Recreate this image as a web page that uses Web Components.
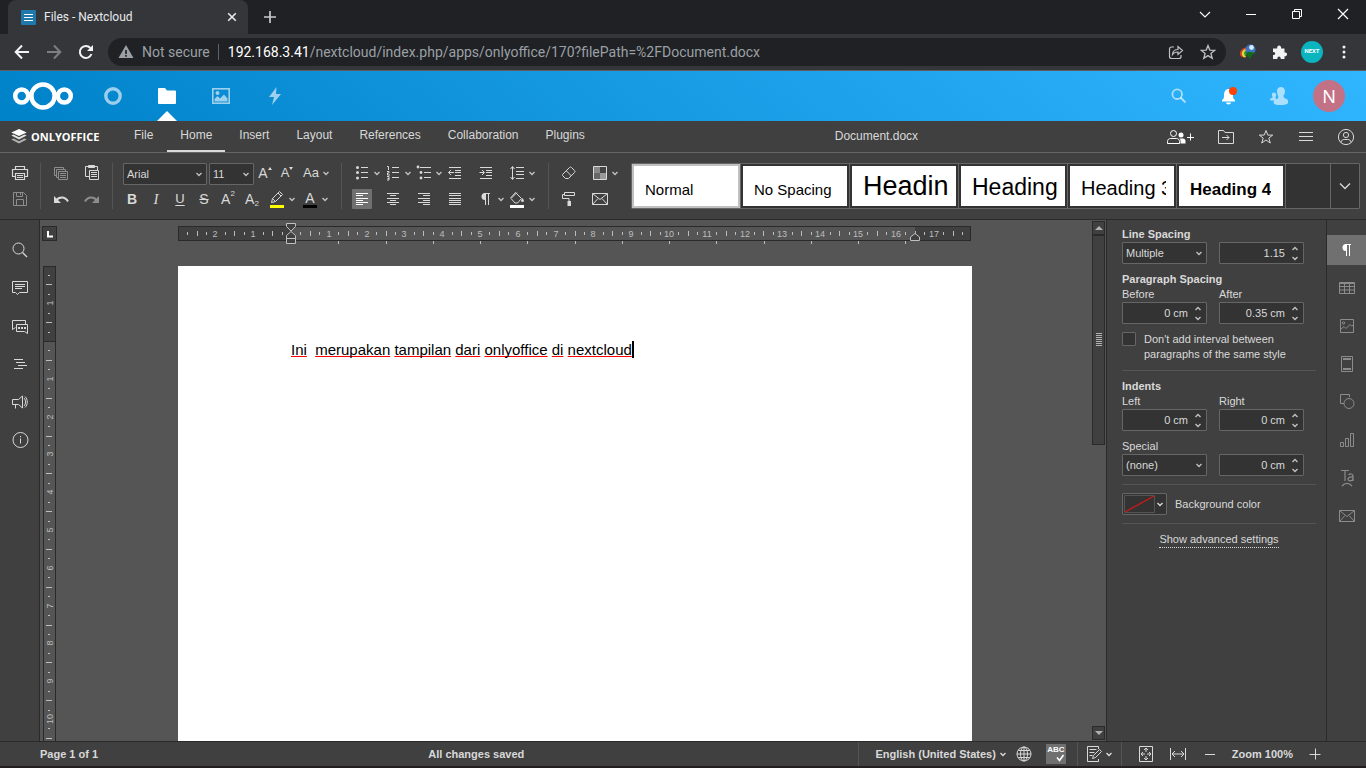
<!DOCTYPE html>
<html lang="en">
<head>
<meta charset="utf-8">
<title>Files - Nextcloud</title>
<style>
  html, body { margin: 0; height: 100%; }
  body { display: flex; flex-direction: column; overflow: hidden; background: #404040; font-family: "Liberation Sans", Arial, sans-serif; font-size: 11px; color: #d9d9d9; }
</style>
</head>
<body>
<browser-tabs></browser-tabs>
<browser-bar></browser-bar>
<cloud-header></cloud-header>
<office-header></office-header>
<office-toolbar></office-toolbar>
<office-main></office-main>
<status-bar></status-bar>
<script>
const BASE = `
  :host, *, *::before, *::after { box-sizing: border-box; }
  button { font: inherit; color: inherit; background: none; border: 0; margin: 0; padding: 0; display: flex; align-items: center; justify-content: center; }
  a { color: inherit; text-decoration: none; }
`;
function define(tag, css, html) {
  customElements.define(tag, class extends HTMLElement {
    connectedCallback() {
      if (this.shadowRoot) return;
      const root = this.attachShadow({ mode: 'open' });
      root.innerHTML = `<style>${BASE}${css}</style>` + (typeof html === 'function' ? html(this) : html);
    }
  });
}

/* Icons: [width, height, drawing]. Lines take the current text colour. */
const hl = (x, y, w) => `<path d="M${x} ${y + .5}h${w}"/>`;
const ICONS = {
  caret: [10, 10, '<path stroke-width="1.4" d="M2.500 4L5 6.500 7.500 4"/>'],
  /* browser */
  favicon: [15, 15, '<rect width="15" height="15" rx="1" fill="#1f79ad" stroke="none"/><path stroke="#fff" d="M3 4.500h9M3 7.500h9M3 10.500h9"/>'],
  close: [10, 10, '<path stroke-width="1.6" d="M1.2 1.2l7.6 7.6M8.8 1.2L1.2 8.8"/>'],
  plus: [12, 12, '<path stroke-width="1.7" d="M6 0v12M0 6h12"/>'],
  wdown: [12, 12, '<path stroke-width="1.1" d="M1 4l5 5 5-5"/>'],
  wmin: [12, 12, '<path d="M1 6.500h10"/>'],
  wmax: [12, 12, '<path d="M1.500 3.500h7v7h-7zM3.500 3.500v-2h7v7h-2"/>'],
  wclose: [12, 12, '<path stroke-width="1.2" d="M1 1l10 10M11 1L1 11"/>'],
  back: [16, 16, '<path stroke-width="2" d="M15 8H2M8 1.500L1.700 8 8 14.500"/>'],
  forward: [16, 16, '<path stroke-width="2" d="M1 8h13M8 1.500L14.300 8 8 14.500"/>'],
  reload: [16, 16, '<path stroke-width="2" d="M13.500 10A6 6 0 1 1 12.400 4"/><path fill="currentColor" stroke="none" d="M15 1v6H9z"/>'],
  warn: [16, 14, '<path fill="currentColor" stroke="none" d="M8 0l7.500 13H.5z"/><path stroke="#202124" stroke-width="1.700" d="M8 5v4M8 10v1.700"/>'],
  share: [16, 16, '<path stroke-width="1.200" d="M6 3H3.500a2 2 0 0 0-2 2v7.500a2 2 0 0 0 2 2h7.500a2 2 0 0 0 2-2V11M4.500 10.500c.3-3.500 2.200-5 5.500-5V2.500L14.500 6.500 10 10.500V8c-2.500 0-4.200.600-5.500 2.500z"/>'],
  bstar: [16, 16, '<path stroke-width="1.300" d="M8 1.500l1.800 4.600 4.900.3-3.800 3.100 1.300 4.800L8 11.600l-4.200 2.700 1.300-4.800L1.300 6.400l4.900-.3z"/>'],
  idm: [18, 16, '<g stroke="none"><path fill="#d94325" d="M1 10c0-4 3-6.500 7-6.500v2C5.500 6.500 5 9 6 11.500L7 13c-4 1-6-1-6-3z"/><path fill="#e6d43a" d="M2.800 9.500c0-2.500 2-4.500 5-4.500l-.5 2C5.500 8.500 5.500 11 7 12l-.5 1.500C4 13.500 2.800 11.500 2.800 9.500z"/><path fill="#1d9a34" d="M5 9.500C5 8 6 6.500 8 6.200L7.500 11H6z"/><circle cx="11.500" cy="5.500" r="5" fill="#3d74c4"/><circle cx="12.500" cy="3.500" r="2.400" fill="#d8ecff"/><path fill="#0f6d18" d="M8 7.500l9.500 1.500-4 1.500-3 5-1-3-4.500-.500 4-1.500z"/></g>'],
  puzzle: [16, 16, '<path fill="currentColor" stroke="none" d="M1 4.500h4.200c-.8-3.500 4.200-4.500 4-.2v.2h3.300v4c3.300-.8 3.500 3.700.3 3.700h-.3V15H8.700c.6-3.400-4-3.400-3.300 0H1v-4c3 .5 3-3.500 0-3z"/>'],
  dots: [4, 14, '<g fill="currentColor" stroke="none"><circle cx="2" cy="2" r="1.500"/><circle cx="2" cy="7" r="1.500"/><circle cx="2" cy="12" r="1.500"/></g>'],
  /* cloud header */
  cloud: [62, 30, '<g stroke="#fff"><circle cx="31" cy="15" r="11.600" stroke-width="4.500"/><circle cx="9.700" cy="15" r="6.500" stroke-width="4.500"/><circle cx="52.300" cy="15" r="6.500" stroke-width="4.500"/></g>'],
  ring: [18, 18, '<circle cx="9" cy="9" r="7.200" stroke-width="3.400"/>'],
  folder: [18, 16, '<path fill="currentColor" stroke="none" d="M1 0h6l2 2.500h8a1 1 0 0 1 1 1V15a1 1 0 0 1-1 1H1a1 1 0 0 1-1-1V1a1 1 0 0 1 1-1z"/>'],
  photo: [18, 16, '<rect x=".8" y=".8" width="16.400" height="14.400" stroke-width="1.600"/><g fill="currentColor" stroke="none"><circle cx="5.500" cy="5" r="2"/><path d="M2.500 13.500V11l3-3 2.500 2.500L12 6.500l3.500 4v3z"/></g>'],
  bolt: [14, 18, '<path fill="currentColor" stroke="none" d="M8.500 0L1 10h5l-2 8 9-11H8z"/>'],
  csearch: [16, 16, '<circle cx="6.200" cy="6.200" r="4.800" stroke-width="1.800"/><path stroke-width="2" d="M9.500 9.500l5 5"/>'],
  bell: [16, 18, '<g fill="#fff" stroke="none"><path d="M7 2C3.500 3 3 6 3 9c0 2-.5 3-2 4v1.500h13V13c-1.500-1-2-2-2-4 0-3-.5-6-4-7z"/><path d="M5 15.500h5a2.500 2 0 0 1-5 0z"/></g>'],
  people: [18, 18, '<g fill="currentColor" stroke="none"><path d="M11 0c2.500 0 4 1.800 4 4 0 2-.7 3.500-1.500 4.500 0 2 .5 2.500 4 4 .7.600.7 3 .3 4-3 2-12 2-14 0-.5-2 0-3 .5-3.500 3-1 4-1.500 4-3.500C7.500 8 7 6 7 4c0-2.200 1.500-4 4-4z"/><path d="M4 5.500c1 0 2.200.8 2.200 2.500 0 1.300-.8 2.200-.8 3.200l1.500.8-3.500 1.500H.5c-.5-.5-.5-1.500 0-2l2-1c.3-1-.6-1.700-.6-3 0-1.200.8-2 2.100-2z"/></g>'],
  notch: [20, 10, '<path fill="#fff" stroke="none" d="M10 0l10 10H0z"/>'],
  /* editor header */
  stack: [16, 15, '<g fill="currentColor" stroke="none"><path d="M8 0l7.700 3.500L8 7 .3 3.500z"/><path opacity=".85" d="M.3 6.500L2.500 5.600 8 8.200l5.500-2.600 2.200.9L8 10.500z"/><path opacity=".6" d="M.3 10.500l2.200-1L8 12.200l5.500-2.700 2.200 1L8 14.500z"/></g>'],
  users: [28, 14, '<circle cx="6.500" cy="3.500" r="3"/><path d="M.500 13.500v-2c0-2 1.500-3 3-3h6c1.500 0 3 1 3 3v2z"/><g fill="currentColor" stroke="none"><circle cx="14" cy="5" r="2.500"/><path d="M13.500 13.500V10l-1-1.500h3.500c1.500 0 2.500 1 2.500 2.500v2.500z"/></g><path d="M23.500 3.500v7M20 7.500h7"/>'],
  goto: [16, 14, '<path d="M.500 13.500V.500h5l1.500 2h8.500v11zM4 7.500h7M8.500 5L11 7.500 8.500 10"/>'],
  star: [16, 16, '<path d="M8 1.500l1.800 4.600h4.900l-3.900 3 1.500 4.900L8 11l-4.300 3 1.500-4.900-3.900-3h4.900z"/>'],
  menu: [14, 10, hl(0, 0, 14) + hl(0, 4, 14) + hl(0, 8, 14)],
  account: [18, 18, '<circle cx="9" cy="9" r="7.600"/><circle cx="9" cy="7" r="2.600"/><path d="M3.800 14.500c.5-2.500 2-3 3.500-3h3.400c1.500 0 3 .5 3.500 3"/>'],
  /* toolbar, 20px grid */
  print: [20, 20, '<path stroke-width="1.200" d="M5.500 6.500v-3h9v3M5.500 13.500h-3V6.500h15v7h-3M5.500 10.500h9v6h-9z"/><path d="M7 12.500h6M7 14.500h6"/>'],
  save: [20, 20, '<path d="M3.500 3.500h10l3 3v10h-13zM6.500 3.500v4h6v-4M6.500 16.500v-6h7v6M10.500 4v2"/>'],
  copy: [20, 20, '<path d="M5 12.500H3.500v-8h9V6M5.500 6.500h3M8 14.500H5.500V7"/><path d="M7.500 8.500h9v8h-9zM9 10.500h6M9 12.500h6M9 14.500h6M5.500 6.500h9V8"/>'],
  paste: [20, 20, '<path d="M7 13.500H3.500v-10h12V7"/><path fill="currentColor" d="M6.500 2.500h6v2h-6z"/><path d="M7.500 7.500h9v9h-9zM9 9.500h6M9 11.500h6M9 13.500h6"/>'],
  undo: [20, 20, '<path stroke-width="2" d="M5 11.500c3-4 9-4.500 12 1"/><path fill="currentColor" stroke="none" d="M3 7v7h7z"/>'],
  redo: [20, 20, '<path stroke-width="2" d="M15 11.500c-3-4-9-4.500-12 1"/><path fill="currentColor" stroke="none" d="M17 7v7h-7z"/>'],
  marker: [20, 20, '<path d="M4.500 13.500l1-4 7-7 3 3-7 7zM11 4l3 3M5.500 9.500l3 3"/><path stroke="#ff0" stroke-width="3" d="M3 17.500h14"/>'],
  bullets: [20, 20, '<g fill="currentColor" stroke="none"><circle cx="5.500" cy="4.500" r="1.500"/><circle cx="5.500" cy="9.500" r="1.500"/><circle cx="5.500" cy="15" r="1.500"/></g>' + hl(9, 4, 7) + hl(9, 9, 7) + hl(9, 14, 7)],
  numbers: [20, 20, '<path d="M4 3.500h1.500V7M4 8.500h2v1.500H4.500V12H7M4 13.500h2v3.500H4M4.500 15.500h1.500"/>' + hl(9, 4, 7) + hl(9, 9, 7) + hl(9, 14, 7)],
  levels: [20, 20, '<g fill="currentColor" stroke="none"><circle cx="4" cy="4" r="1.400"/><circle cx="7" cy="9.500" r="1.400"/><circle cx="7" cy="15" r="1.400"/></g>' + hl(6, 4, 11) + hl(10, 9, 7) + hl(10, 14, 7)],
  outdent: [20, 20, hl(4, 4, 12) + hl(10, 7, 6) + hl(10, 9, 6) + hl(10, 12, 6) + hl(4, 15, 12) + '<path d="M3.500 9.500H9M6 7L3.500 9.500 6 12"/>'],
  indent: [20, 20, hl(4, 4, 12) + hl(10, 7, 6) + hl(10, 9, 6) + hl(10, 12, 6) + hl(4, 15, 12) + '<path d="M3.500 9.500H8M6 7l2.500 2.500L6 12"/>'],
  spacing: [20, 20, hl(9, 4, 8) + hl(9, 8, 8) + hl(9, 11, 8) + hl(9, 15, 8) + '<path d="M5.500 4v12M3.500 6l2-2.500 2 2.500M3.500 14l2 2.500 2-2.500"/>'],
  left: [20, 20, hl(4, 4, 12) + hl(4, 6, 7) + hl(4, 9, 12) + hl(4, 11, 7) + hl(4, 13, 12) + hl(4, 15, 7)],
  center: [20, 20, hl(4, 4, 12) + hl(7, 6, 6) + hl(4, 9, 12) + hl(7, 11, 6) + hl(4, 13, 12) + hl(7, 15, 6)],
  right: [20, 20, hl(4, 4, 12) + hl(9, 6, 7) + hl(4, 9, 12) + hl(9, 11, 7) + hl(4, 13, 12) + hl(9, 15, 7)],
  justify: [20, 20, hl(4, 4, 12) + hl(4, 6, 12) + hl(4, 9, 12) + hl(4, 11, 12) + hl(4, 13, 12) + hl(4, 15, 12)],
  pilcrow: [20, 20, '<path fill="currentColor" stroke="none" d="M9 4a3.500 3.500 0 0 0 0 7z"/><path d="M8 4.500h6M9.500 4v12M12.500 4v12"/>'],
  fill: [20, 20, '<path d="M8.500 3.500l6 6-4 4.500H8L4 9.500l6-6M8.500 3.500l-5 5.500"/><path fill="currentColor" stroke="none" d="M15.500 9l1.500 2.500a1.500 1.500 0 1 1-3 0z"/><path stroke="#fff" stroke-width="3" d="M3 17.500h14"/>'],
  eraser: [20, 20, '<path d="M3.500 11.500l7-7c.7-.7 1.300-.7 2 0l3 3c.7.700.7 1.300 0 2l-6 6h-3l-3-3c-.4-.4-.4-.6 0-1zM7.500 8l5 5"/>'],
  palette: [20, 20, '<g stroke="none"><path fill="#888" d="M4 4h6v6H4z"/><path fill="#444" d="M10 4h6v6h-6z"/><path fill="#666" d="M4 10h6v6H4z"/><path fill="#999" d="M10 10h6v6h-6z"/></g><path d="M3.500 3.500h13v13h-13z"/>'],
  roller: [20, 20, '<path d="M5.500 3.500h10v3h-10zM5.500 5.500h-2v4h6.500v3"/><path fill="currentColor" stroke="none" d="M8.500 12H12v5H8.500z"/>'],
  mail: [20, 20, '<path d="M2.500 4.500h15v11h-15zM2.500 4.500l7.500 6 7.500-6M2.500 15.500l5.500-6M17.500 15.500l-5.500-6"/>'],
  chevron: [14, 10, '<path stroke-width="1.300" d="M2 2.500l5 5 5-5"/>'],
  /* rails */
  find: [20, 20, '<circle cx="8.500" cy="8.500" r="5.500"/><path stroke-width="1.300" d="M12.500 12.500l4.500 4.500"/>'],
  comment: [20, 20, '<path d="M2.500 3.500h15v11h-8l-2 2-2-2h-3zM5 6.500h10M5 8.500h10M5 10.500h7"/>'],
  chat: [20, 20, '<path d="M2.500 13.500v-9h13V8M2.500 13.500l3-2M6.500 8.500h11v9l-3-2h-8z"/><path stroke-width="2" stroke-dasharray="2 1" d="M8 12h8"/>'],
  outline: [20, 20, hl(4, 5, 9) + hl(6, 8, 9) + hl(8, 11, 9) + hl(4, 14, 9)],
  speaker: [20, 20, '<path d="M2.500 7.500h6l4-3.500v12l-4-3.500h-6zM5.500 12.500v4M14 6c2 2 2 6 0 8M15 4.500c3 3 3 8 0 11"/>'],
  info: [20, 20, '<circle cx="10.500" cy="10" r="7.500"/><path d="M10.500 8.500v5M10.500 6v1.300"/>'],
  table: [20, 20, '<path d="M2.500 4.500h15v11h-15zM2.500 5.500h15M2.500 8.500h15M2.500 12h15M7.500 6v10M12.500 6v10"/>'],
  image: [20, 20, '<path d="M3.500 3.500h13v13h-13zM4 13l3-2.500 2 2 4-4 1.500 1.500 2-1"/><circle cx="6.500" cy="7" r="1.200"/>'],
  headfoot: [20, 20, '<path d="M4.500 2.500h11v15h-11z"/><path stroke-width="2" d="M6 5h8M6 15h8"/>'],
  shapes: [20, 20, '<path d="M7 11.500H3.500v-9h9V5"/><circle cx="12" cy="11.500" r="5"/>'],
  chart: [20, 20, '<path d="M3.500 12.500h3v4h-3zM8.500 8.500h3v8h-3zM13.500 3.500h3v13h-3z"/>'],
  textart: [20, 20, '<path stroke-width="1.200" d="M4 2.500h8M8 2.500V13M11.500 7c1-1.500 4.500-1.500 4.500 1v5M16 9c-6-.5-6 4-3 3.800 2 0 3-1.300 3-2.500M5 18c3-3.500 7-3.500 10 0"/>'],
  /* rulers and status */
  tabstop: [15, 15, '<path stroke="#fff" stroke-width="2" d="M6 5V10.500h5"/>'],
  arrowup: [8, 4, '<path fill="currentColor" stroke="none" d="M4 0l4 4H0z"/>'],
  arrowdown: [8, 4, '<path fill="currentColor" stroke="none" d="M4 4l4-4H0z"/>'],
  grip: [6, 14, [0, 2, 4, 6, 8, 10, 12].map(y => hl(0, y, 6)).join('')],
  spin: [8, 14, '<path stroke-width="1.400" d="M1.500 4L4 1.500 6.500 4M1.500 11L4 13.500 6.500 11"/>'],
  globe: [20, 20, '<circle cx="10" cy="10" r="7"/><ellipse cx="10" cy="10" rx="3.500" ry="7"/><path d="M10 3v14M3 10h14M4.500 6.500h11M4.500 13.500h11"/>'],
  check: [8, 8, '<path stroke-width="1.600" d="M1 3.500l2.500 3L7.500 1"/>'],
  review: [20, 20, '<path d="M14.500 5V2.500h-11v15h11V15M5.500 5.500h7M5.500 8.500h5M5.500 11.500h3M8.500 14.500l1-3 6-6 2 2-6 6z"/>'],
  fitpage: [20, 20, '<path d="M3.500 2.500h13v15h-13zM10 4v4M10 12v4M5 10h4M11 10h4M8 6l2-2 2 2M8 14l2 2 2-2M7 8l-2 2 2 2M13 8l2 2-2 2"/>'],
  fitwidth: [20, 20, '<path d="M2.500 4v12M17.500 4v12M4.500 10h11M7 7l-3 3 3 3M13 7l3 3-3 3"/>'],
  minus: [12, 12, hl(1, 6, 10)],
  add: [12, 12, '<path d="M.500 6.500h11M6.500 .500v11"/>'],
  nofill: [31, 18, '<path fill="#333" stroke="#555" d="M.500 .500h30v17H.500z"/><path stroke="#d01818" stroke-width="1.300" d="M1 17L30 1"/>'],
  up: [4, 3, '<path fill="currentColor" stroke="none" d="M2 0l2 3H0z"/>'],
  down: [4, 3, '<path fill="currentColor" stroke="none" d="M2 3l2-3H0z"/>']
};
define('ui-icon', ':host { display: block; flex: none; line-height: 0; } svg { display: block; overflow: visible; }', el => {
  const [w, h, d] = ICONS[el.getAttribute('name')];
  return `<svg width="${w}" height="${h}" viewBox="0 0 ${w} ${h}" fill="none" stroke="currentColor" aria-hidden="true">${d}</svg>`;
});
const icon = n => `<ui-icon name="${n}"></ui-icon>`;

/* Browser chrome */
define('browser-tabs', `
  :host { display: flex; height: 34px; background: #202124; padding-left: 8px; color: #e8eaed; flex: none; font-family: Roboto, "Open Sans", sans-serif; font-size: 12px; }
  .tab { display: flex; align-items: center; width: 240px; background: #35363a; border-radius: 8px 8px 0 0; padding: 0 11px 0 13px; gap: 8px; }
  .tab span { flex: 1; white-space: nowrap; }
  .new { width: 44px; color: #c8cacd; }
  .win { display: flex; margin-left: auto; height: 28px; color: #fff; }
  .win button { width: 46px; }
`, `<div class="tab">${icon('favicon')}<span>Files - Nextcloud</span><button aria-label="Close tab">${icon('close')}</button></div>
  <button class="new" aria-label="New tab">${icon('plus')}</button>
  <div class="win"><button aria-label="Search tabs">${icon('wdown')}</button><button aria-label="Minimize">${icon('wmin')}</button><button aria-label="Restore">${icon('wmax')}</button><button aria-label="Close">${icon('wclose')}</button></div>`);

define('browser-bar', `
  :host { display: flex; align-items: center; height: 37px; background: #35363a; border-bottom: 1px solid #5c5d60; flex: none; padding: 0 6px; color: #f1f3f4; font-family: Roboto, "Open Sans", sans-serif; font-size: 14px; }
  .nav { width: 32px; height: 28px; }
  .dim { color: #7d7e81; }
  .box { flex: 1; min-width: 0; display: flex; align-items: center; height: 28px; background: #202124; border-radius: 14px; margin: 0 6px; padding: 0 2px 0 10px; color: #9aa0a6; }
  .secure { display: flex; align-items: center; gap: 8px; }
  .url { flex: 1; min-width: 0; overflow: hidden; white-space: nowrap; border-left: 1px solid #5f6368; margin-left: 8px; padding-left: 9px; line-height: 16px; }
  .url b { font-weight: 400; color: #fff; }
  .box .nav { color: #bdc1c6; }
  .me { width: 22px; height: 22px; border-radius: 50%; background: #0ab5c0; color: #fff; font-size: 6px; font-weight: 700; margin: 0 5px; padding-bottom: 4px; }
  .more { width: 32px; height: 28px; }
`, `<button class="nav" aria-label="Back">${icon('back')}</button><button class="nav dim" aria-label="Forward">${icon('forward')}</button><button class="nav" aria-label="Reload">${icon('reload')}</button>
  <div class="box"><span class="secure">${icon('warn')}Not secure</span><div class="url" role="textbox" aria-label="Address"><b>192.168.3.41</b>/nextcloud/index.php/apps/onlyoffice/170?filePath=%2FDocument.docx</div>
  <button class="nav" aria-label="Share">${icon('share')}</button><button class="nav" aria-label="Bookmark">${icon('bstar')}</button></div>
  <button class="nav" aria-label="Download manager">${icon('idm')}</button><button class="nav" aria-label="Extensions">${icon('puzzle')}</button><button class="me" aria-label="Profile">NEXT</button><button class="more" aria-label="Menu">${icon('dots')}</button>`);

/* Cloud header */
define('cloud-header', `
  :host { display: flex; height: 50px; flex: none; padding: 0 12px; background: linear-gradient(40deg, #0082c9 0%, #30b6ff 100%); color: #fff; }
  .logo { display: flex; align-items: center; width: 74px; }
  nav { display: flex; }
  nav a { display: grid; place-items: center; grid-template-columns: 54px; grid-template-rows: 50px; }
  nav a > * { grid-area: 1 / 1; }
  .soft { color: rgba(255,255,255,.6); }
  .notch { align-self: end; }
  .side { display: flex; margin-left: auto; align-items: center; }
  .side button { width: 50px; height: 50px; position: relative; }
  .dot { position: absolute; left: 25px; top: 16px; width: 8px; height: 8px; border-radius: 50%; background: #ff4402; }
  .face { width: 32px; height: 32px; border-radius: 50%; background: #c37285; font-size: 18px; line-height: 32px; font-family: "Noto Sans", sans-serif; }
`, `<a class="logo" href="#" aria-label="Nextcloud">${icon('cloud')}</a>
  <nav><a class="soft" href="#" aria-label="Dashboard">${icon('ring')}</a><a href="#" aria-label="Files">${icon('folder')}<span class="notch">${icon('notch')}</span></a><a class="soft" href="#" aria-label="Photos">${icon('photo')}</a><a class="soft" href="#" aria-label="Activity">${icon('bolt')}</a></nav>
  <div class="side"><button class="soft" aria-label="Search">${icon('csearch')}</button><button aria-label="Notifications">${icon('bell')}<span class="dot"></span></button><button class="soft" aria-label="Contacts">${icon('people')}</button><button aria-label="Account"><span class="face">N</span></button></div>`);

/* Editor header */
define('office-header', `
  :host { display: flex; height: 32px; flex: none; background: #404040; border-bottom: 1px solid #666; font-size: 12px; color: #d9d9d9; }
  .brand { display: flex; align-items: center; gap: 4px; width: 121px; padding-left: 11px; color: #fff; font: 700 11px "Open Sans", sans-serif; }
  nav { display: flex; gap: 1px; }
  nav a { padding: 0 13px; line-height: 29px; height: 31px; }
  nav a.on { border-bottom: 2px solid #d9d9d9; }
  .title { flex: 1; text-align: center; line-height: 31px; }
  button { width: 40px; height: 31px; }
  .users { width: 51px; color: #fff; }
`, `<a class="brand" href="#">${icon('stack')}ONLYOFFICE</a>
  <nav>${['File', 'Home', 'Insert', 'Layout', 'References', 'Collaboration', 'Plugins'].map(t => `<a href="#"${t === 'Home' ? ' class="on"' : ''}>${t}</a>`).join('')}</nav>
  <div class="title">Document.docx</div>
  <button class="users" aria-label="Share users">${icon('users')}</button><button aria-label="Open location">${icon('goto')}</button><button aria-label="Favorite">${icon('star')}</button><button aria-label="View settings">${icon('menu')}</button><button aria-label="User">${icon('account')}</button>`);

/* Form controls */
define('drop-down', `
  :host { display: grid; height: 22px; font-size: 11px; }
  select { grid-area: 1 / 1; appearance: none; font: inherit; color: #d9d9d9; background: #333; border: 1px solid #666; border-radius: 1px; margin: 0; padding: 0 3px; width: 100%; min-width: 0; height: 22px; }
  ui-icon { grid-area: 1 / 1; place-self: center end; margin-right: 3px; pointer-events: none; color: #c0c0c0; }
`, el => `<select aria-label="${el.getAttribute('label')}"><option>${el.getAttribute('value')}</option></select>${icon('caret')}`);
define('spin-box', `
  :host { display: grid; height: 22px; font-size: 11px; }
  input { grid-area: 1 / 1; font: inherit; color: #d9d9d9; background: #333; border: 1px solid #666; border-radius: 1px; margin: 0; padding: 0 18px 0 3px; width: 100%; min-width: 0; height: 22px; text-align: right; }
  ui-icon { grid-area: 1 / 1; place-self: center end; margin-right: 5px; pointer-events: none; color: #c0c0c0; }
`, el => `<input type="text" aria-label="${el.getAttribute('label')}" value="${el.getAttribute('value')}">${icon('spin')}`);
define('tool-button', `
  :host { display: flex; height: 20px; color: #d9d9d9; }
  button { width: 20px; height: 20px; border-radius: 1px; }
  :host([wide]) button:first-of-type { width: var(--cell); }
  :host([active]) button:first-of-type { background: #707070; color: #fff; }
  :host([disabled]) { opacity: .5; }
  button.more { width: 10px; color: #c0c0c0; }
`, el => `<button aria-label="${el.getAttribute('label')}">${el.hasAttribute('icon') ? icon(el.getAttribute('icon')) : '<slot></slot>'}</button>${el.hasAttribute('menu') ? `<button class="more" aria-label="${el.getAttribute('label')} options">${icon('caret')}</button>` : ''}`);
const tool = (i, label, more = '') => `<tool-button icon="${i}" label="${label}" ${more}></tool-button>`;

/* Toolbar */
define('office-toolbar', `
  :host { display: flex; align-items: flex-start; flex: none; height: 67px; padding: 10px 6px 10px 0; background: #404040; border-bottom: 1px solid #2a2a2a; }
  .group { display: grid; grid-template-columns: repeat(var(--n), 31px); row-gap: 6px; flex: none; height: 46px; padding: 0 10px; border-right: 1px solid #555; }
  .one { grid-template-columns: 20px; }
  .two { grid-template-columns: 31px 20px; }
  .font { display: flex; flex-direction: column; gap: 6px; width: 229px; padding-left: 7px; }
  .row { display: flex; height: 20px; }
  .row drop-down { margin-left: 3px; width: 84px; }
  .row drop-down + drop-down { margin-left: 2px; width: 45px; }
  .upper { --cell: 22px; }
  .lower { --cell: 24px; }
  .g { font-size: 14px; line-height: 20px; }
  .g + ui-icon { align-self: flex-start; margin-top: 4px; }
  .g13 { font-size: 13px; line-height: 20px; }
  .g13 + ui-icon { align-self: flex-start; margin-top: 4px; }
  .serif { font: italic 15px/20px "Liberation Serif", serif; }
  .u { text-decoration: underline; text-underline-offset: 2px; }
  .small { font-size: 8px; line-height: 10px; align-self: flex-start; }
  .low { align-self: flex-end; }
  .gap { margin-left: 3px; }
  .bar { display: block; border-bottom: 3px solid #000; width: 14px; height: 18px; text-align: center; line-height: 16px; font-size: 14px; }
  style-gallery { flex: 1; min-width: 0; }
`, `<div class="group one">${tool('print', 'Print')}${tool('save', 'Save', 'disabled')}</div>
  <div class="group two">${tool('copy', 'Copy', 'disabled')}${tool('paste', 'Paste')}${tool('undo', 'Undo')}${tool('redo', 'Redo', 'disabled')}</div>
  <div class="group font">
    <div class="row upper"><drop-down label="Font" value="Arial"></drop-down><drop-down label="Font size" value="11"></drop-down>
      <tool-button wide label="Increase font size"><span class="g">A</span>${icon('up')}</tool-button><tool-button wide label="Decrease font size"><span class="g13">A</span>${icon('down')}</tool-button><tool-button class="gap" label="Change case" menu><span class="g13">Aa</span></tool-button></div>
    <div class="row lower"><tool-button wide label="Bold"><b class="g">B</b></tool-button><tool-button wide label="Italic"><span class="serif">I</span></tool-button><tool-button wide label="Underline"><span class="g13 u">U</span></tool-button><tool-button wide label="Strikeout"><s class="g">S</s></tool-button><tool-button wide label="Superscript"><span class="g">A</span><span class="small">2</span></tool-button><tool-button wide label="Subscript"><span class="g">A</span><span class="small low">2</span></tool-button>
      ${tool('marker', 'Highlight color', 'menu class="gap"')}<tool-button class="gap" label="Font color" menu><span class="bar">A</span></tool-button></div>
  </div>
  <div class="group" style="--n:6">
    ${tool('bullets', 'Bullets', 'menu')}${tool('numbers', 'Numbering', 'menu')}${tool('levels', 'Multilevel list', 'menu')}${tool('outdent', 'Decrease indent')}${tool('indent', 'Increase indent')}${tool('spacing', 'Line spacing', 'menu')}
    ${tool('left', 'Align left', 'active')}${tool('center', 'Align center')}${tool('right', 'Align right')}${tool('justify', 'Justified')}${tool('pilcrow', 'Nonprinting characters', 'menu')}${tool('fill', 'Shading', 'menu')}
  </div>
  <div class="group" style="--n:2;border:0">${tool('eraser', 'Clear style')}${tool('palette', 'Color scheme', 'menu')}${tool('roller', 'Copy style')}${tool('mail', 'Mail merge')}</div>
  <style-gallery></style-gallery>`);

define('style-gallery', `
  :host { display: flex; height: 46px; border: 1px solid #666; border-radius: 1px; background: #333; color: #000; }
  .items { flex: 1; min-width: 0; display: flex; overflow: hidden; }
  .items button { flex: none; width: 108px; height: 44px; margin-right: 1px; border: 2px solid #333; box-shadow: 1px 0 #666; background: #fff; justify-content: flex-start; padding: 0 8px 0 11px; }
  .items button.on { border-color: #c0c0c0; }
  .items div { overflow: hidden; white-space: nowrap; font-size: 15px; line-height: 40px; height: 40px; padding-top: 4px; }
  .items span { line-height: 0; }
  .more { width: 29px; border-left: 1px solid #666; color: #d9d9d9; }
`, `<div class="items">${[['Normal', 15], ['No Spacing', 15], ['Headin', 27], ['Heading', 23], ['Heading 3', 20], ['Heading 4', 17, 700]].map(([t, s, w], i) => `<button${i ? '' : ' class="on"'}><div><span style="font-size:${s}px;font-weight:${w || 400}">${t}</span></div></button>`).join('')}</div><button class="more" aria-label="More styles">${icon('chevron')}</button>`);

/* Rulers */
const CM = 37.8;
function ticks(from, to, vertical) {
  let out = '';
  for (let q = from; q <= to; q++) {
    const p = Math.round(q * CM / 4);
    if (q === 0) continue;
    if (q % 4 === 0) {
      const n = Math.abs(q / 4);
      out += vertical ? `<text transform="translate(10 ${p}) rotate(-90)">${n}</text>` : `<text x="${p}" y="3">${n}</text>`;
    } else {
      const half = q % 2 === 0;
      const a = half ? 5 : 3, s = half ? -3 : -2;
      out += vertical ? `<rect x="${half ? 3 : 5}" y="${p}" width="${half ? 6 : 2}" height="1"/>` : `<rect x="${p}" y="${s}" width="1" height="${a}"/>`;
    }
  }
  return out;
}
const RULER_CSS = `svg { display: block; } text { font-size: 9px; text-anchor: middle; fill: #bdbdbd; } rect { fill: #bdbdbd; }`;
define('ruler-h', `:host { display: block; height: 22px; width: 794px; } ${RULER_CSS}`,
  `<svg width="794" height="22" shape-rendering="crispEdges">
    <path fill="#555" stroke="#2a2a2a" d="M.500 3.500h792v14H.500z"/><path fill="#404040" d="M1 4h112v13H1zM737 4h55v13h-55z"/>
    <g transform="translate(113 11)">${ticks(-11, 71)}${[...Array(13)].map((_, i) => `<rect x="${Math.round((i + 1) * 47.25)}" y="7" width="1" height="3"/>`).join('')}</g>
    <g fill="#404040" stroke="#c0c0c0" shape-rendering="auto"><path d="M108.500 .500h9v3l-4.500 4.500-4.500-4.500zM113 8.500l4.500 4v8h-9v-8zM108.500 15.500h9M737 10.500l4.500 3.500v3.500h-9V14z"/></g>
  </svg>`);
/* The vertical scale runs as far as the window shows it. */
define('ruler-v', `:host { display: block; width: 13px; overflow: hidden; } ${RULER_CSS}`, () =>
  `<svg width="13" height="1123" shape-rendering="crispEdges">
    <path fill="#555" stroke="#2a2a2a" d="M.500 .500h12v1122H.500z"/><path fill="#404040" stroke="#2a2a2a" d="M.500 .500h12v75H.500z"/>
    <g transform="translate(0 75)">${ticks(-7, Math.min(103, Math.floor((innerHeight - 368) / CM * 4)), true)}</g>
  </svg>`);

define('scroll-bar', `
  :host { display: flex; flex-direction: column; width: 14px; padding: 1px 1px 1px 0; color: #b0b0b0; }
  button { height: 14px; flex: none; border: 1px solid #2a2a2a; background: #404040; }
  .thumb { height: 210px; margin: 0 0 auto; border: 1px solid #2a2a2a; background: #404040; display: grid; place-items: center; }
`, `<button aria-label="Scroll up">${icon('arrowup')}</button><div class="thumb">${icon('grip')}</div><button aria-label="Scroll down">${icon('arrowdown')}</button>`);

define('document-canvas', `
  :host { display: grid; grid-template-columns: 18px minmax(0, 1fr) 14px; grid-template-rows: 46px minmax(0, 1fr); background: #555; overflow: hidden; }
  .corner { width: 15px; height: 15px; margin: 6px 0 0 2px; border: 1px solid #2a2a2a; background: #404040; }
  ruler-h { justify-self: center; margin-top: 3px; }
  ruler-v { margin-left: 3px; grid-area: 2 / 1; }
  scroll-bar { grid-area: 1 / 3 / 3 / 4; }
  .view { overflow: hidden; display: flex; justify-content: center; align-items: flex-start; }
  .page { flex: none; width: 794px; min-height: 1123px; background: #fff; padding: 75px 57px 75px 113px; color: #000; font-size: 15px; line-height: 17px; }
  p { margin: 0; display: flex; white-space: pre; }
  u { text-decoration-line: underline; text-decoration-color: #f00; text-decoration-thickness: 1px; text-underline-offset: 1px; text-decoration-skip-ink: none; }
  i { width: 2px; height: 17px; background: #000; }
`, `<button class="corner" aria-label="Left tab">${icon('tabstop')}</button><ruler-h></ruler-h><ruler-v></ruler-v>
  <div class="view"><article class="page"><p><span><u>Ini</u>  <u>merupakan</u> <u>tampilan</u> <u>dari</u> <u>onlyoffice</u> <u>di</u> <u>nextcloud</u></span><i></i></p></article></div>
  <scroll-bar></scroll-bar>`);

/* Side rails */
define('side-rail', `
  :host { display: flex; flex-direction: column; gap: 8px; padding-top: 15px; background: #404040; color: #d9d9d9; }
  :host([dim]) { color: #8c8c8c; }
  button { height: 30px; width: 100%; flex: none; }
  button.on { background: #707070; color: #fff; }
`, el => el.getAttribute('items').split(' ').map(n => `<button aria-label="${n}"${n === el.getAttribute('current') ? ' class="on"' : ''}>${icon(n)}</button>`).join(''));

define('paragraph-panel', `
  :host { display: flex; flex-direction: column; gap: 8px; padding: 7px 10px 0 15px; background: #404040; border: solid #2a2a2a; border-width: 0 1px; line-height: 15px; font-size: 11px; }
  h2 { font-size: 11px; margin: 0; font-weight: 700; grid-column: 1 / 3; }
  .pair { display: grid; grid-template-columns: 85px 85px; column-gap: 12px; }
  hr { border: 0; border-top: 1px solid #555; margin: 0; width: 100%; }
  .check { display: flex; gap: 8px; align-items: flex-start; }
  .check input { appearance: none; width: 14px; height: 14px; margin: 0; border: 1px solid #666; border-radius: 1px; background: #333; flex: none; }
  .color { display: flex; align-items: center; gap: 8px; }
  .color button { width: 45px; height: 22px; border: 1px solid #666; border-radius: 1px; background: #333; }
  .adv { align-self: center; border-bottom: 1px dotted #d9d9d9; }
`, `<div class="pair"><h2>Line Spacing</h2><drop-down label="Line spacing" value="Multiple"></drop-down><spin-box label="Line spacing value" value="1.15"></spin-box></div>
  <div class="pair"><h2>Paragraph Spacing</h2><span>Before</span><span>After</span><spin-box label="Before" value="0 cm"></spin-box><spin-box label="After" value="0.35 cm"></spin-box></div>
  <label class="check"><input type="checkbox"><span>Don't add interval between<br>paragraphs of the same style</span></label>
  <hr>
  <div class="pair"><h2>Indents</h2><span>Left</span><span>Right</span><spin-box label="Left" value="0 cm"></spin-box><spin-box label="Right" value="0 cm"></spin-box></div>
  <div class="pair"><span>Special</span><span></span><drop-down label="Special" value="(none)"></drop-down><spin-box label="Special value" value="0 cm"></spin-box></div>
  <hr>
  <div class="color"><button aria-label="Background color">${icon('nofill')}${icon('caret')}</button><span>Background color</span></div>
  <hr>
  <a class="adv" href="#">Show advanced settings</a>`);

define('office-main', `
  :host { display: grid; grid-template-columns: 40px minmax(0, 1fr) 221px 39px; grid-template-rows: minmax(0, 1fr); flex: 1; min-height: 0; }
  .left { border-right: 1px solid #2a2a2a; }
`, `<side-rail class="left" items="find comment chat outline speaker info"></side-rail>
  <document-canvas></document-canvas>
  <paragraph-panel></paragraph-panel>
  <side-rail dim current="pilcrow" items="pilcrow table image headfoot shapes chart textart mail"></side-rail>`);

define('status-bar', `
  :host { display: flex; flex: none; height: 27px; background: #404040; border-top: 1px solid #2a2a2a; border-bottom: 2px solid #231f20; font-weight: 700; line-height: 24px; padding-left: 40px; }
  .mid { flex: 1; text-align: center; padding-right: 4px; }
  .cell { display: flex; align-items: center; border-left: 1px solid #555; }
  .lang { padding-left: 16px; padding-right: 11px; }
  .lang button:nth-of-type(1) { gap: 2px; margin-right: 6px; }
  .ib { width: 20px; height: 20px; }
  .abc { display: flex; flex-direction: column; background: #707070; margin-left: 12px; font: 700 8px/8px "Liberation Sans", sans-serif; color: #fff; }
  .abc ui-icon { align-self: flex-end; margin-right: 2px; }
  .rev { padding: 0 7px 0 6px; }
  .zoom { padding-left: 14px; padding-right: 41px; gap: 12px; }
`, `<span>Page 1 of 1</span><span class="mid">All changes saved</span>
  <div class="cell lang"><button>English (United States)${icon('caret')}</button><button class="ib" aria-label="Language">${icon('globe')}</button><button class="ib abc" aria-label="Spell checking">ABC${icon('check')}</button></div>
  <div class="cell rev"><button aria-label="Track changes">${icon('review')}${icon('caret')}</button></div>
  <div class="cell zoom"><button class="ib" aria-label="Fit to page">${icon('fitpage')}</button><button class="ib" aria-label="Fit to width">${icon('fitwidth')}</button><button class="ib" aria-label="Zoom out">${icon('minus')}</button><span>Zoom 100%</span><button class="ib" aria-label="Zoom in">${icon('add')}</button></div>`);
</script>
</body>
</html>
